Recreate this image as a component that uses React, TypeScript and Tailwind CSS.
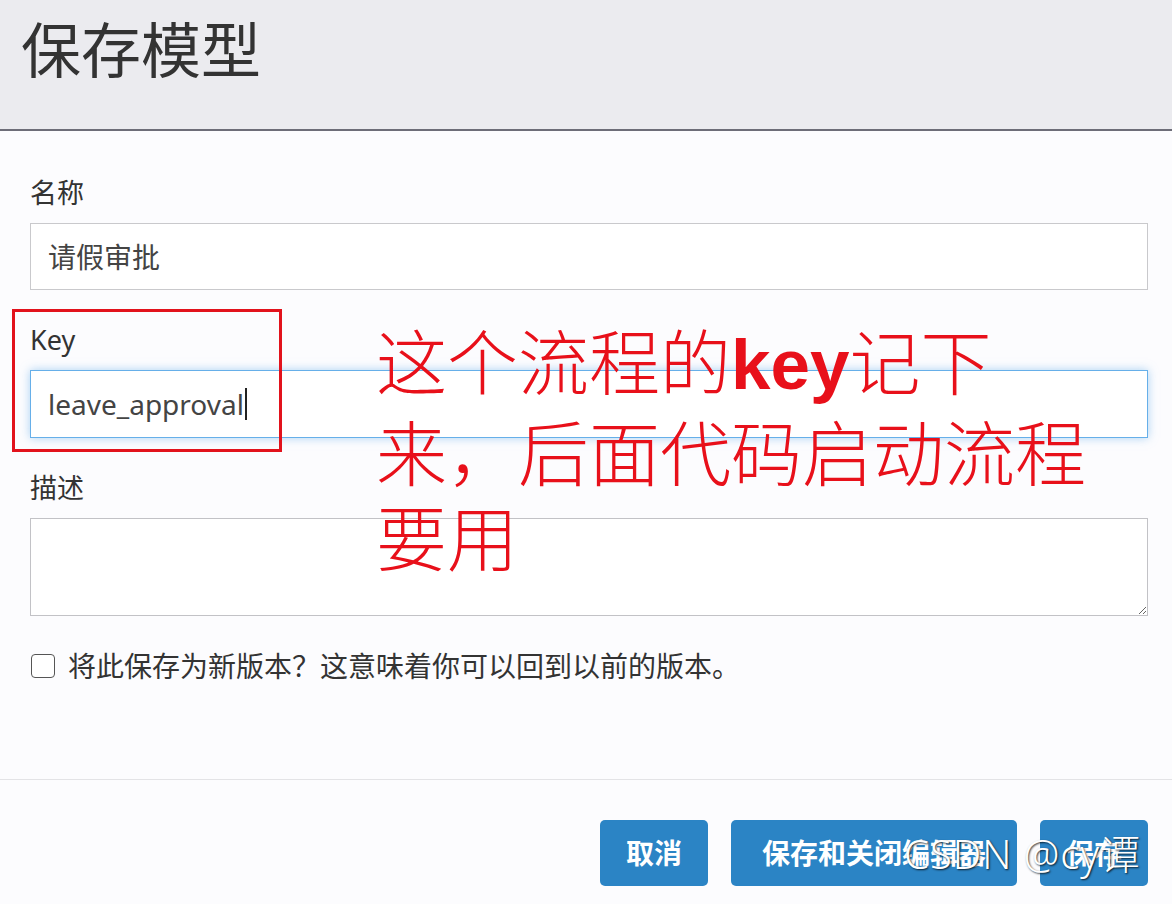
import React from "react";

// Save-model dialog from the BPMN modeler, with the red annotation laid over it.
const UI = "font-['Noto_Sans','Noto_Sans_CJK_SC',sans-serif]";

function Field({ label, children }: { label: string; children: React.ReactNode }) {
  return (
    <div className="flex flex-col">
      <div className="h-[37px] text-[27px] leading-[37px] text-[#333]">{label}</div>
      <div className="mt-3">{children}</div>
    </div>
  );
}

export default function App() {
  return (
    <div className={`relative h-[904px] w-[1172px] overflow-hidden bg-[#fcfcfe] ${UI}`}>
      {/* header */}
      <div className="flex h-[131px] items-start border-b-2 border-[#6d6d78] bg-[#ebebef] px-[21px] pt-[10px]">
        <h1 className="text-[60px] font-normal leading-[80px] text-[#333]">保存模型</h1>
      </div>

      {/* form */}
      <div className="flex flex-col gap-[31px] px-[30px] pr-[24px] pt-[43px]">
        <Field label="名称">
          <div className="flex h-[67px] items-center border border-[#c9c9cc] bg-white px-[17px] text-[28px] text-[#444]">
            请假审批
          </div>
        </Field>
        <Field label="Key">
          <div className="flex h-[68px] items-center border border-[#66afe9] bg-white px-[17px] text-[28px] text-[#444] shadow-[0_0_9px_rgba(102,175,233,0.55)]">
            leave_approval
            <span className="ml-[1px] inline-block h-[32px] w-[2px] bg-[#222]" />
          </div>
        </Field>
        <Field label="描述">
          <textarea className="block h-[98px] w-full border border-[#c2c2c6] bg-white outline-none" />
        </Field>
        <label className="flex h-[37px] items-center gap-[13px] text-[28px] text-[#333]">
          <span className="ml-[1px] inline-block h-[24px] w-[24px] rounded-[4px] border-[1.5px] border-[#555] bg-white" />
          将此保存为新版本？这意味着你可以回到以前的版本。
        </label>
      </div>

      {/* footer */}
      <div className="mt-[95px] flex justify-end gap-[23px] border-t border-[#e3e3e6] pr-[24px] pt-[40px]">
        <button className="h-[66px] w-[108px] rounded-[5px] bg-[#2b84c5] text-[28px] font-bold text-white">取消</button>
        <button className="h-[66px] w-[286px] rounded-[5px] bg-[#2b84c5] text-[28px] font-bold text-white">保存和关闭编辑器</button>
        <button className="h-[66px] w-[108px] rounded-[5px] bg-[#2b84c5] text-[28px] font-bold text-white">保存</button>
      </div>

      {/* annotation */}
      <div className="pointer-events-none absolute left-[12px] top-[309px] h-[143px] w-[270px] border-[3px] border-[#e2121c]" />
      <div className="pointer-events-none absolute left-[376px] top-[316px] text-[71px] font-light leading-[85px] text-[#e8101a] font-['Noto_Sans_CJK_SC',serif]">
        这个流程的<span className="font-['Liberation_Sans',sans-serif] font-bold">key</span>记下
        <br />
        来，后面代码启动流程
        <br />
        要用
      </div>

      {/* watermark */}
      <div className="pointer-events-none absolute left-[904px] top-[828px] text-[40px] font-light leading-[52px] tracking-[1px] text-white [text-shadow:1px_1px_2px_rgba(0,0,0,0.8)] font-['Noto_Sans','Noto_Sans_CJK_SC',sans-serif]">
        CSDN @cy谭
      </div>
    </div>
  );
}
